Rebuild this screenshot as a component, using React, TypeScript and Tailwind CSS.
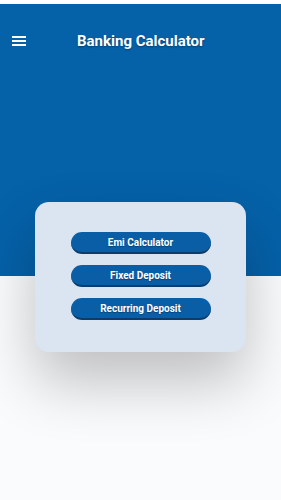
export default function App() {
  const items = ["Emi Calculator", "Fixed Deposit", "Recurring Deposit"];

  return (
    <div
      className="flex h-[500px] w-full flex-col overflow-hidden bg-[#fafbfd]"
      style={{ fontFamily: "Roboto, 'Liberation Sans', sans-serif" }}
    >
      <div className="h-[4px] bg-white" />
      <div className="h-[272px] bg-[#0561a8]">
        <div className="flex h-[74px] items-center px-[12px]">
          <svg width="14" height="10" viewBox="0 0 14 10" className="shrink-0">
            <rect x="0" y="0" width="14" height="2" fill="#fff" />
            <rect x="0" y="4" width="14" height="2" fill="#fff" />
            <rect x="0" y="8" width="14" height="2" fill="#fff" />
          </svg>
          <h1 className="ml-[51px] text-[15px] font-bold text-white [text-shadow:0_1px_2px_rgba(0,0,0,0.35)]">
            Banking Calculator
          </h1>
        </div>
      </div>

      <div className="-mt-[74px] flex justify-center">
        <div className="flex h-[150px] w-[211px] flex-col items-center gap-[11px] rounded-[14px] bg-[#dae5f1] pt-[30px] shadow-[0_30px_60px_rgba(0,0,0,0.24)]">
          {items.map((label) => (
            <button
              key={label}
              className="h-[22px] w-[140px] rounded-full border-b-[2px] border-[#0b3c6b] bg-[#0a5ea6] text-[10px] font-bold text-white [text-shadow:0_1px_1px_rgba(0,0,0,0.3)]"
            >
              {label}
            </button>
          ))}
        </div>
      </div>
    </div>
  );
}
